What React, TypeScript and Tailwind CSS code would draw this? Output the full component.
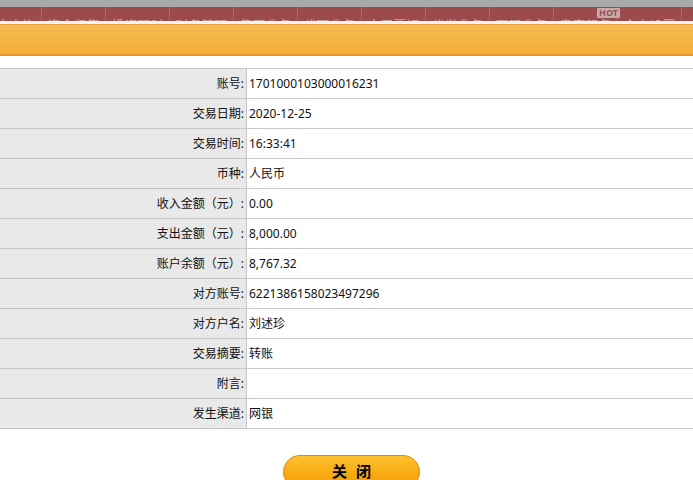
import React from 'react';

const navItems = ['账户查询', '资金归集', '投资理财', '财务管理', '集团业务', '代理业务', '电子票据', '代发业务', '国际业务', '贵宾服务', '个人设置'];

const rows: [string, string][] = [
  ['账号:', '1701000103000016231'],
  ['交易日期:', '2020-12-25'],
  ['交易时间:', '16:33:41'],
  ['币种:', '人民币'],
  ['收入金额（元）:', '0.00'],
  ['支出金额（元）:', '8,000.00'],
  ['账户余额（元）:', '8,767.32'],
  ['对方账号:', '6221386158023497296'],
  ['对方户名:', '刘述珍'],
  ['交易摘要:', '转账'],
  ['附言:', ''],
  ['发生渠道:', '网银'],
];

const font = { fontFamily: '"Noto Sans", "Noto Sans CJK SC", sans-serif' };

export default function App() {
  return (
    <div className="w-[693px] h-[480px] overflow-hidden bg-white" style={font}>
      {/* top strip */}
      <div className="h-[7px] bg-[#aaaaaa]" />
      <div className="relative h-[14px] bg-[#9b4b4b] overflow-hidden flex -ml-[22px]">
        {navItems.map((item) => (
          <div key={item} className="w-[64px] shrink-0 border-r border-[#ad6464] pt-[10px] text-center text-[13px] leading-[16px] text-[#c4a3a3]">
            {item}
          </div>
        ))}
      </div>
      <div className="relative h-0">
        <span className="absolute left-[597px] -top-[13px] px-[2px] bg-[#c9a9a9] text-[9px] leading-[10px] font-bold text-[#8e5656] rounded-[1px]">HOT</span>
      </div>
      <div className="h-[3px] bg-[#f3f3f3]" />
      <div className="h-[1px] bg-[#e9a23a]" />
      <div className="h-[31px] bg-gradient-to-b from-[#f7bb52] to-[#f4ae38] border-b-2 border-[#e8961e]" />

      <div className="mt-[12px] border-t border-[#c6c6c6]">
        {rows.map(([label, value]) => (
          <div key={label} className="flex h-[30px] border-b border-[#c6c6c6] text-[12px] text-[#111]">
            <div className="w-[247px] shrink-0 bg-[#e8e9e8] border-r border-[#c6c6c6] flex items-center justify-end pr-[2px]">
              {label}
            </div>
            <div className="flex-1 flex items-center pl-[2px]">{value}</div>
          </div>
        ))}
      </div>

      <div className="flex justify-center pt-[26px] pl-[10px]">
        <button className="w-[137px] h-[34px] rounded-full border border-[#d88a1a] bg-gradient-to-b from-[#fcc22e] via-[#f9ac12] to-[#f29a0c] flex justify-center pt-[4px] text-[15px] font-bold text-black tracking-[9px] pl-[9px]">
          关闭
        </button>
      </div>
    </div>
  );
}
